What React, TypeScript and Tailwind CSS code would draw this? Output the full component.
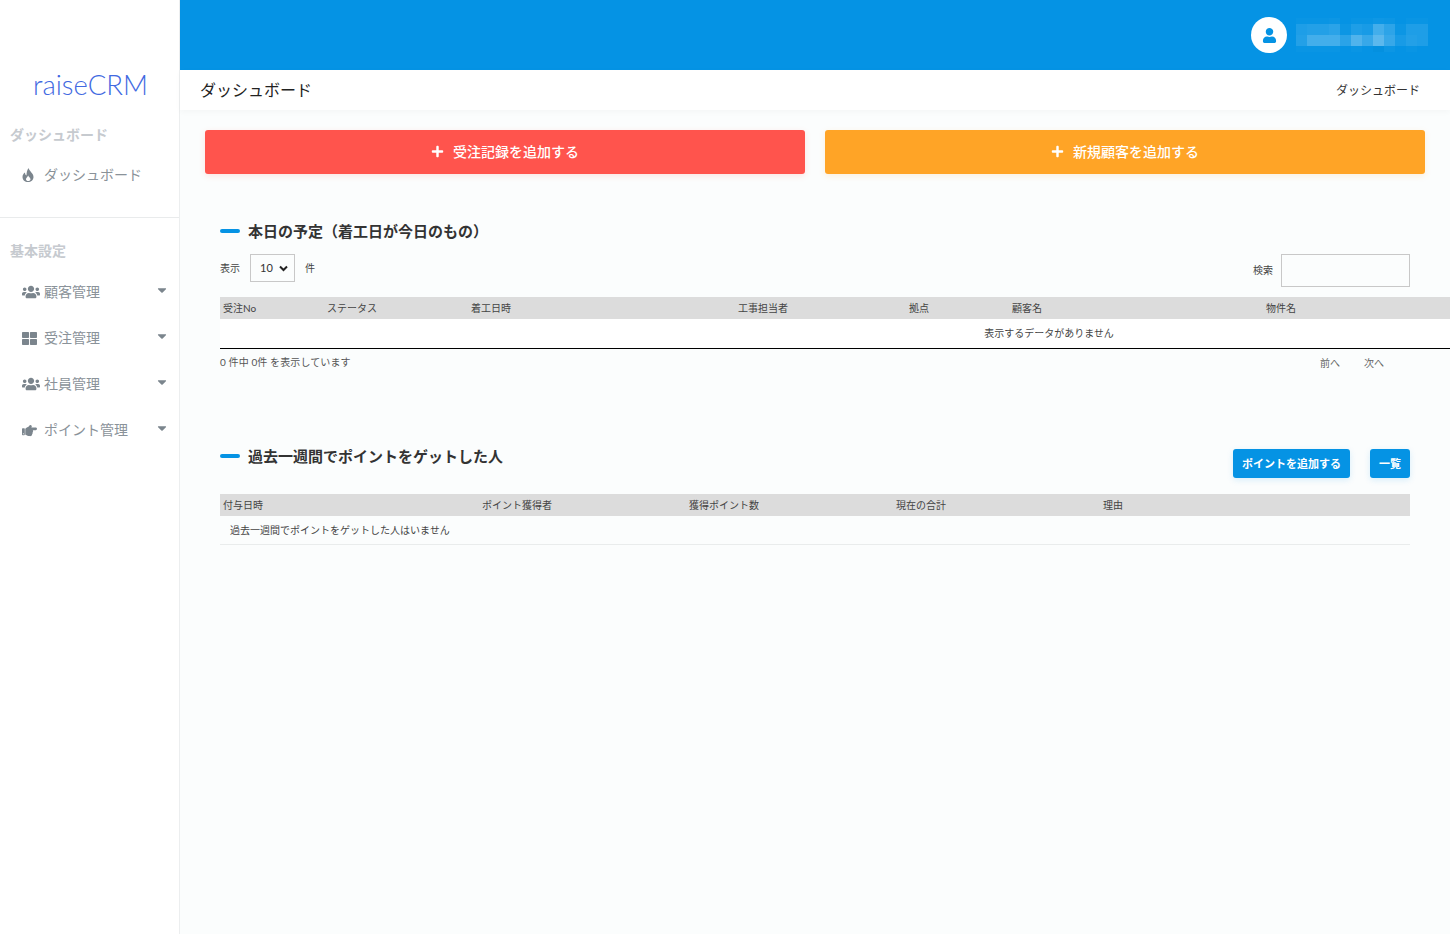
import { FaCaretDown, FaHandPointRight, FaPlus, FaThLarge, FaUser, FaUsers } from "react-icons/fa";
import type { ReactNode } from "react";

const FONT = "font-['Lato','Noto_Sans_CJK_JP',sans-serif]";

const MOSAIC = [
  ["bg-white/[0.02]", "bg-white/[0.02]", "bg-white/[0.02]", "bg-white/[0.03]", "bg-transparent", "bg-white/[0.02]", "bg-white/[0.02]", "bg-white/[0.04]", "bg-white/[0.03]", "bg-transparent", "bg-white/[0.02]", "bg-white/[0.02]"],
  ["bg-white/[0.1]", "bg-white/[0.12]", "bg-white/[0.12]", "bg-white/[0.15]", "bg-white/[0.03]", "bg-white/[0.1]", "bg-white/[0.08]", "bg-white/[0.25]", "bg-white/[0.16]", "bg-white/[0.03]", "bg-white/[0.1]", "bg-white/[0.1]"],
  ["bg-white/[0.12]", "bg-white/[0.25]", "bg-white/[0.25]", "bg-white/[0.25]", "bg-white/[0.15]", "bg-white/[0.3]", "bg-white/[0.2]", "bg-white/[0.35]", "bg-white/[0.2]", "bg-white/[0.08]", "bg-white/[0.12]", "bg-white/[0.1]"],
  ["bg-white/[0.02]", "bg-white/[0.02]", "bg-white/[0.02]", "bg-white/[0.02]", "bg-transparent", "bg-white/[0.02]", "bg-transparent", "bg-black/[0.02]", "bg-white/[0.03]", "bg-transparent", "bg-white/[0.02]", "bg-transparent"],
];

const MENU = [
  { label: "顧客管理", icon: <FaUsers size={18} /> },
  { label: "受注管理", icon: <FaThLarge size={15} /> },
  { label: "社員管理", icon: <FaUsers size={18} /> },
  { label: "ポイント管理", icon: <FaHandPointRight size={15} /> },
];

const TODAY_COLS = [
  { label: "受注No", w: "w-[104px]" },
  { label: "ステータス", w: "w-[144px]" },
  { label: "着工日時", w: "w-[267px]" },
  { label: "工事担当者", w: "w-[171px]" },
  { label: "拠点", w: "w-[103px]" },
  { label: "顧客名", w: "w-[254px]" },
  { label: "物件名", w: "w-[613px]" },
];

const POINT_COLS = [
  { label: "付与日時", w: "w-[259px]" },
  { label: "ポイント獲得者", w: "w-[207px]" },
  { label: "獲得ポイント数", w: "w-[207px]" },
  { label: "現在の合計", w: "w-[207px]" },
  { label: "理由", w: "w-[310px]" },
];

function FlameIcon() {
  return (
    <svg width="12" height="14" viewBox="0 0 12 14" className="text-[#7b858d] -mt-px">
      <path
        fill="currentColor"
        fillRule="evenodd"
        d="M6.5 0C7 3 11.5 5 11.5 9C11.5 12 9 14 6 14C3 14 .5 12 .5 9C.5 7 1.5 5.5 3 4.5C3 6 3.5 7 4.5 7.5C4.5 5 5 2 6.5 0ZM6.2 7.5C6.5 9 8.5 9.7 8.5 11.2C8.5 12.4 7.4 13 6.2 13C5 13 4 12.3 4 11.2C4 9.7 5.5 9.2 6.2 7.5Z"
      />
    </svg>
  );
}

function SectionTitle({ children, barClass = "" }: { children: ReactNode; barClass?: string }) {
  return (
    <h2 className="flex items-center gap-2 text-[15px] leading-[20px] font-bold">
      <span className={`w-5 h-1 rounded-full bg-[#0593e4] ${barClass}`} />
      <span className="text-[#333]">{children}</span>
    </h2>
  );
}

function HeadRow({ cols }: { cols: { label: string; w: string }[] }) {
  return (
    <thead>
      <tr className="bg-[#dcdcdc] h-[22px]">
        {cols.map((c) => (
          <th key={c.label} className={`${c.w} px-[3px] text-left font-normal text-[10px] text-[#444]`}>{c.label}</th>
        ))}
      </tr>
    </thead>
  );
}

export default function App() {
  return (
    <div className={`${FONT} flex h-screen overflow-hidden bg-[#fbfdfd] text-[#444]`}>
      {/* Sidebar */}
      <aside className="w-[180px] shrink-0 bg-white border-r border-[#eceeef]">
        <div className="pt-[69px] pl-0.5 h-[115px] text-center text-[27.5px] leading-[32px] font-light text-[#4169e1]">raiseCRM</div>
        <div className="pl-2.5 mt-[10px] text-[14px] leading-[20px] font-bold text-[#c6cacf]">ダッシュボード</div>
        <div className="flex items-center h-[40px] mt-[10px] pl-[22px] text-[14px] text-[#8a9299]">
          <FlameIcon />
          <span className="ml-[10px] -mt-0.5">ダッシュボード</span>
        </div>
        <div className="mt-[22px] border-t border-[#e9ebec]" />
        <div className="pl-2.5 mt-[23px] text-[14px] leading-[20px] font-bold text-[#c6cacf]">基本設定</div>
        <nav className="mt-[8px]">
          {MENU.map((m) => (
            <div key={m.label} className="flex items-center h-[46px] pl-[22px] pr-[10px] text-[14px] text-[#8a9299]">
              <span className="w-[18px] flex justify-start text-[#7b858d]">{m.icon}</span>
              <span className="ml-1 flex-1 -mt-0.5">{m.label}</span>
              <FaCaretDown size={14} className="text-[#7b858d] -mt-1" />
            </div>
          ))}
        </nav>
      </aside>

      <div className="flex-1 min-w-0 flex flex-col">
        {/* Top bar */}
        <header className="h-[70px] shrink-0 bg-[#0593e4] flex items-center justify-end pr-[22px]">
          <div className="w-9 h-9 rounded-full bg-white flex items-center justify-center text-[#0593e4]">
            <FaUser size={15} />
          </div>
          <div className="ml-[9px] -mt-px flex flex-col" aria-hidden>
            {MOSAIC.map((row, i) => (
              <div key={i} className={`flex ${i === 0 || i === 3 ? "h-[6px]" : "h-[11px]"}`}>
                {row.map((c, j) => <span key={j} className={`w-[11px] ${c}`} />)}
              </div>
            ))}
          </div>
        </header>

        {/* Page title */}
        <div className="h-10 shrink-0 bg-white flex items-center justify-between pl-5 pr-[30px] shadow-[0_2px_6px_rgba(0,0,0,0.03)]">
          <h1 className="text-[16px] text-[#222] -mt-px">ダッシュボード</h1>
          <span className="text-[12px] text-[#333] mt-0.5">ダッシュボード</span>
        </div>

        <main className="flex-1 px-[25px] pt-5">
          <div className="flex gap-5">
            <button className="flex-1 h-11 pb-0.5 rounded-[3px] bg-[#ff544d] text-white text-[14px] font-medium flex items-center justify-center gap-[9px] shadow-[0_2px_6px_rgba(255,84,77,0.15)]">
              <FaPlus size={13} />受注記録を追加する
            </button>
            <button className="flex-1 h-11 pb-0.5 rounded-[3px] bg-[#ffa426] text-white text-[14px] font-medium flex items-center justify-center gap-[9px] shadow-[0_2px_6px_rgba(255,164,38,0.15)]">
              <FaPlus size={13} />新規顧客を追加する
            </button>
          </div>

          {/* Today's schedule */}
          <section className="mt-[47px] pl-[15px]">
            <SectionTitle>本日の予定（着工日が今日のもの）</SectionTitle>
            <div className="flex justify-between mt-[13px] pr-[15px] text-[10px] text-[#444]">
              <div className="flex items-start">
                <span className="mt-[7px]">表示</span>
                <div className="ml-2.5 w-[45px] h-7 border border-[#c8c8c8] flex items-center pl-[9px] gap-1 text-[11px] text-[#333]">
                  10
                  <svg width="9" height="7" viewBox="0 0 9 7" className="ml-0.5">
                    <path d="M1 1.5 L4.5 5 L8 1.5" fill="none" stroke="#222" strokeWidth="2" />
                  </svg>
                </div>
                <span className="ml-2.5 mt-[7px]">件</span>
              </div>
              <div className="flex items-center">
                <span className="mr-2">検索</span>
                <input className="w-[129px] h-[33px] border border-[#c8c8c8] bg-transparent" />
              </div>
            </div>
            <table className="mt-[10px] w-[1656px] max-w-none table-fixed border-b border-black">
              <HeadRow cols={TODAY_COLS} />
              <tbody>
                <tr className="bg-white h-[29px]">
                  <td colSpan={7} className="pl-0.5 text-center text-[10px] text-[#444]">表示するデータがありません</td>
                </tr>
              </tbody>
            </table>
            <div className="flex justify-between mt-[6px] pr-[41px] text-[10px] text-[#555]">
              <span className="tracking-[0.1px]">0 件中 0件 を表示しています</span>
              <div className="flex gap-6 mt-px text-[#666]">
                <span>前へ</span>
                <span>次へ</span>
              </div>
            </div>
          </section>

          {/* Points */}
          <section className="mt-[75px] pl-[15px] pr-[15px]">
            <div className="flex justify-between items-start">
              <SectionTitle barClass="mt-px">過去一週間でポイントをゲットした人</SectionTitle>
              <div className="flex gap-5 mt-[3px]">
                <button className="h-[29px] pt-0.5 px-[9px] rounded-[3px] bg-[#0593e4] text-white text-[11px] font-bold shadow-[0_2px_6px_rgba(5,147,228,0.15)]">ポイントを追加する</button>
                <button className="h-[29px] pt-0.5 px-[9px] rounded-[3px] bg-[#0593e4] text-white text-[11px] font-bold shadow-[0_2px_6px_rgba(5,147,228,0.15)]">一覧</button>
              </div>
            </div>
            <table className="mt-4 w-full table-fixed [&_th]:pt-0.5 [&_td]:pt-0.5">
              <HeadRow cols={POINT_COLS} />
              <tbody>
                <tr className="h-[29px] border-b border-[#e9ecec]">
                  <td colSpan={5} className="pl-2.5 text-[10px] text-[#444]">過去一週間でポイントをゲットした人はいません</td>
                </tr>
              </tbody>
            </table>
          </section>
        </main>
      </div>
    </div>
  );
}
